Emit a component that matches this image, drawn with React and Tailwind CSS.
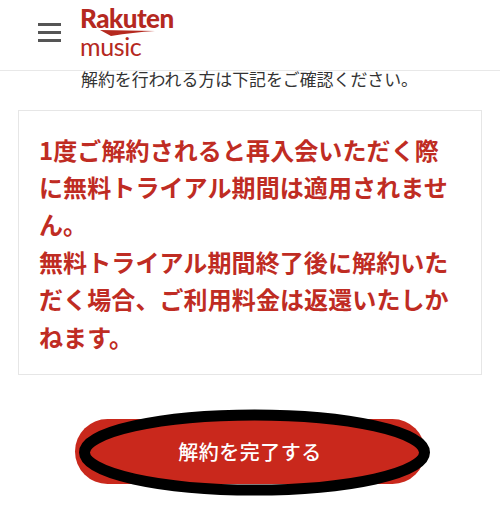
import React from 'react';

const Logo = () => (
    <div className="flex flex-col items-start text-[#b5291f] -mt-[7px]">
        <span className="font-['Lato',sans-serif] font-black text-[26px] leading-[23px] tracking-[-0.5px]">Rakuten</span>
        <svg width="56" height="6" viewBox="0 0 56 6" className="ml-5">
            <path d="M0 0 L55 1 C40 2 26 3.5 11 6 Z" fill="#b5291f" />
        </svg>
        <span className="font-['Lato',sans-serif] text-[25px] leading-[20px] tracking-[-0.4px]">music</span>
    </div>
);

const App = () => {
    return (
        <div className="relative w-[500px] h-[505px] overflow-hidden bg-white font-['Noto_Sans_CJK_JP',sans-serif]">
            {/* Header */}
            <header className="h-[71px] flex items-center pl-[38px] gap-[19px] border-b border-[#e8e8e8]">
                <div className="flex flex-col gap-[5px] -mt-[6px]">
                    <span className="block w-[23px] h-[3px] bg-[#555555]"></span>
                    <span className="block w-[23px] h-[3px] bg-[#555555]"></span>
                    <span className="block w-[23px] h-[3px] bg-[#555555]"></span>
                </div>
                <Logo />
            </header>

            <p className="h-[20px] pl-[81px] text-[16.9px] leading-[15px] text-[#333333] whitespace-nowrap">
                解約を行われる方は下記をご確認ください。
            </p>

            {/* Notice */}
            <div className="mx-[18px] mt-[19px] w-[464px] h-[265px] border border-[#e6e6e6] pt-[19.5px] pl-[20px] pr-[30px] text-[24px] leading-[37.4px] tracking-[0.1px] font-bold text-[#bf2c23]">
                <p>1度ご解約されると再入会いただく際に無料トライアル期間は適用されません。</p>
                <p>無料トライアル期間終了後に解約いただく場合、ご利用料金は返還いたしかねます。</p>
            </div>

            {/* Button */}
            <div className="mt-[44px] ml-[75px] w-[350px] h-[65px] rounded-full bg-[#c9281c] flex items-center justify-center text-white text-[20px] font-medium tracking-[0.5px]">
                解約を完了する
            </div>

            {/* Hand-drawn ellipse */}
            <svg className="absolute left-0 top-[400px]" width="500" height="105" viewBox="0 0 500 105">
                <ellipse cx="254.5" cy="52.5" rx="170" ry="37.5" fill="none" stroke="#000000" strokeWidth="11" />
            </svg>
        </div>
    );
};

export default App;
